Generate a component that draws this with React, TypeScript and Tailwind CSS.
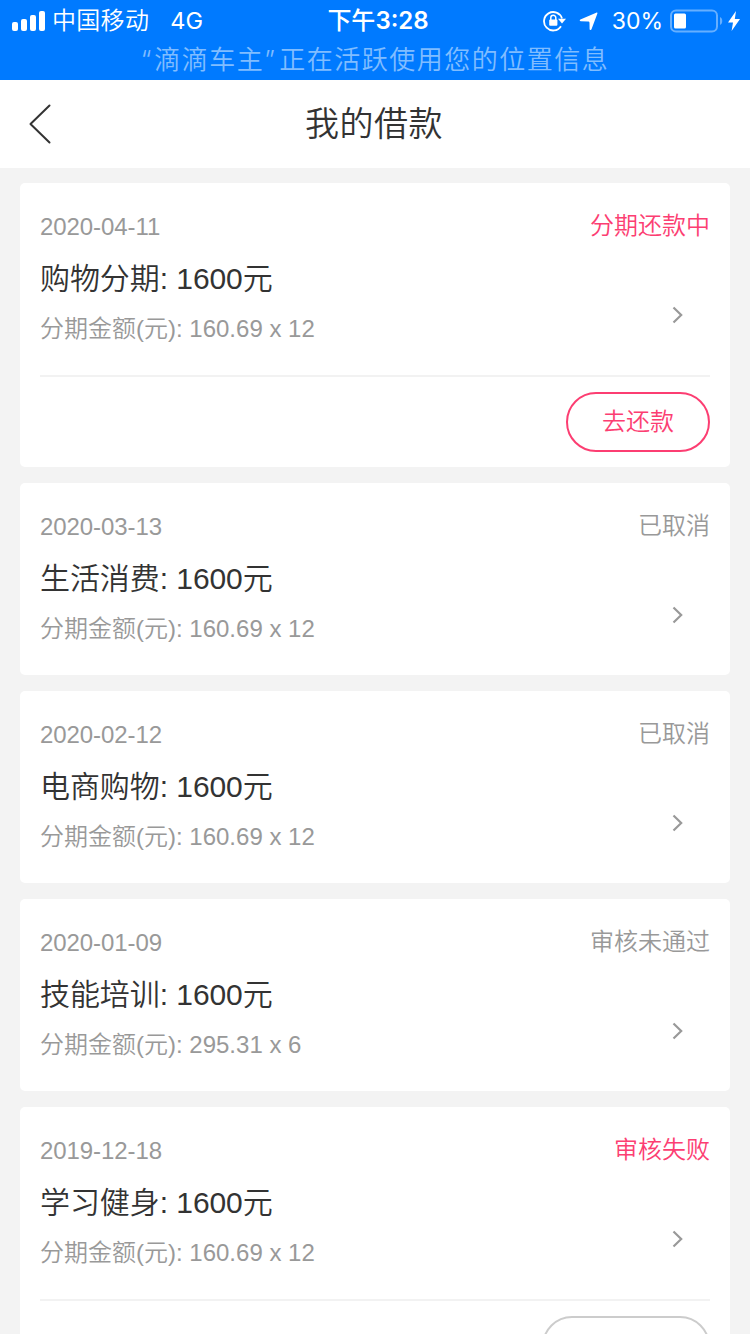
type Loan = {
  date: string
  name: string
  detail: string
  status: string
  highlight?: boolean
  footer?: boolean
  action?: string
}

const loans: Loan[] = [
  { date: '2020-04-11', name: '购物分期', detail: '160.69 x 12', status: '分期还款中', highlight: true, footer: true, action: '去还款' },
  { date: '2020-03-13', name: '生活消费', detail: '160.69 x 12', status: '已取消' },
  { date: '2020-02-12', name: '电商购物', detail: '160.69 x 12', status: '已取消' },
  { date: '2020-01-09', name: '技能培训', detail: '295.31 x 6', status: '审核未通过' },
  { date: '2019-12-18', name: '学习健身', detail: '160.69 x 12', status: '审核失败', highlight: true, footer: true },
]

function StatusBar() {
  return (
    <div className="h-20 shrink-0 bg-[#007aff] text-white font-['Inter','Noto_Sans_CJK_SC',sans-serif]">
      <div className="grid grid-cols-3 h-10 text-[24px] leading-[42px] whitespace-nowrap">
        {/* Signal, carrier */}
        <div className="flex items-center pl-3">
          <svg className="w-[33px] h-5 mr-[7px]" viewBox="0 0 33 20" fill="white">
            <rect x="0" y="11" width="6" height="9" rx="2" />
            <rect x="9" y="8" width="6" height="12" rx="2" />
            <rect x="18" y="4" width="6" height="16" rx="2" />
            <rect x="27" y="0" width="6" height="20" rx="2" />
          </svg>
          <span className="font-[350] tracking-[0.3px]">中国移动</span>
          <span className="ml-[21px] text-[23.5px] font-normal">4G</span>
        </div>

        <div className="text-center font-semibold pl-[6px]">
          <span className="font-medium">下午</span>3:28
        </div>

        {/* Lock, location, battery */}
        <div className="flex items-center justify-end pr-[10px]">
          <svg className="w-[23px] h-[22px]" viewBox="0 0 23 22" fill="none" stroke="white">
            <path d="M18 16.200A9.200 9.200 0 1 1 19 8.500" strokeWidth="1.800" />
            <path d="M15 8.800h8l-4 4.800z" fill="white" stroke="none" />
            <rect x="6.200" y="9.500" width="8.200" height="6.200" rx="1" fill="white" stroke="none" />
            <path d="M7.800 10V7.800a2.500 2.500 0 0 1 5 0V10" strokeWidth="1.500" />
          </svg>
          <svg className="w-[19px] h-[19px] ml-[13px]" viewBox="0 0 19 19" fill="white">
            <path d="M17.200.7c.9-.4 1.500.2 1.100 1.100l-5.800 15.500c-.4 1-1.900.9-1.900-.3l-.1-6c0-1.200-.6-1.600-1.700-1.600l-7-.1C.600 9.300.300 8.100 1.400 7.600z" />
          </svg>
          <span className="ml-[14px] text-[23px] font-normal">30%</span>
          <svg className="w-[53px] h-[24px] ml-[7px]" viewBox="0 0 53 24" fill="none">
            <rect x="1" y="1.500" width="46" height="21" rx="5" stroke="#66afff" strokeWidth="2" />
            <rect x="4" y="4.500" width="12" height="15" rx="1.500" fill="white" />
            <path d="M50 8c3 1.200 3 6.800 0 8z" fill="#66afff" />
          </svg>
          <svg className="w-[12px] h-[20px] ml-[5px]" viewBox="0 0 12 20" fill="white">
            <path d="M8 0L0 11.500h5L3.600 20 12 8H6.800z" />
          </svg>
        </div>
      </div>
      <p className="h-10 leading-[39px] text-center text-[26px] tracking-[1.5px] font-[350] text-[#80bdff]">
        <span className="tracking-[3px]">“</span>滴滴车主<span className="tracking-[4.500px]">”</span>正在活跃使用您的位置信息
      </p>
    </div>
  )
}

function NavBar() {
  return (
    <header className="grid grid-cols-[80px_1fr_80px] items-center h-[88px] shrink-0 bg-white">
      <svg className="w-[22px] h-[40px] ml-[29px]" viewBox="0 0 22 40" fill="none" stroke="#333333" strokeWidth="2">
        <path d="M20.500 1.500L1.500 20l19 18.500" strokeLinecap="round" strokeLinejoin="round" />
      </svg>
      <h1 className="text-center text-[34px] leading-[88px] tracking-[0.5px] pr-[2px] text-[#333333]">我的借款</h1>
    </header>
  )
}

function LoanCard({ loan }: { loan: Loan }) {
  return (
    <div className="shrink-0 bg-white rounded-[5px] px-5">
      <div className="flex justify-between h-[192px]">
        <div className="pt-[26px]">
          <p className="text-2xl leading-[36px] tracking-[-0.07px] text-[#999999]">{loan.date}</p>
          <p className="mt-[14px] text-3xl leading-[40px] tracking-[-0.07px] text-[#333333]">{loan.name}: 1600元</p>
          <p className="mt-3 text-2xl leading-[36px] text-[#999999]">分期金额(元): {loan.detail}</p>
        </div>
        <div className="flex flex-col items-end pt-[25px]">
          <span className={`text-2xl leading-[36px] ${loan.highlight ? 'text-[#fc3e72]' : 'text-[#999999]'}`}>
            {loan.status}
          </span>
          <svg className="w-[12px] h-[18px] mt-[62px] mr-[26px]" viewBox="0 0 12 18" fill="none" stroke="#999999" strokeWidth="2.200">
            <path d="M1.500 1.500L9.200 9 1.500 16.500" />
          </svg>
        </div>
      </div>
      {loan.footer && (
        <div className="flex justify-end border-t-2 border-[#f2f2f2] pt-[15px] pb-[15px]">
          {loan.action ? (
            <button className="h-[60px] px-[34px] rounded-full border-2 border-[#fc3e72] text-2xl leading-[56px] text-[#fc3e72]">
              {loan.action}
            </button>
          ) : (
            <button className="w-[168px] h-[60px] rounded-full border-2 border-[#cccccc]" />
          )}
        </div>
      )}
    </div>
  )
}

export default function App() {
  return (
    <div className="flex flex-col w-[750px] h-[1334px] overflow-hidden bg-[#f3f3f3] font-[350] font-['Liberation_Sans','Noto_Sans_CJK_SC',sans-serif]">
      <StatusBar />
      <NavBar />
      <main className="flex flex-col gap-4 px-5 pt-[15px]">
        {loans.map((loan) => (
          <LoanCard key={loan.date} loan={loan} />
        ))}
      </main>
    </div>
  )
}
